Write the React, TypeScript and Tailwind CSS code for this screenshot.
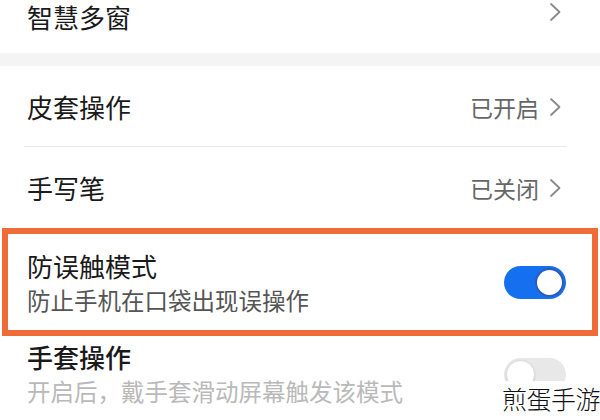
import React from "react";

const font = { fontFamily: '"Noto Sans CJK SC", "Noto Sans", sans-serif' };

function Chevron() {
  return (
    <svg width="13" height="20" viewBox="0 0 13 20" fill="none" className="shrink-0">
      <path d="M2 2l8.5 8L2 18" stroke="#8a8a8a" strokeWidth="1.8" strokeLinecap="round" strokeLinejoin="round" />
    </svg>
  );
}

function Toggle({ on }: { on: boolean }) {
  if (on) {
    return (
      <div className="w-[62px] h-[33px] rounded-full bg-[#1570ef] flex items-center justify-end p-[2px] shrink-0">
        <div className="w-[29px] h-[29px] rounded-full bg-white border-2 border-[#2a5cbf]" />
      </div>
    );
  }
  return (
    <div className="w-[62px] h-[33px] rounded-full bg-[#e8e8e8] flex items-center justify-start p-[2px] shrink-0">
      <div className="w-[29px] h-[29px] rounded-full bg-white border border-[#dcdcdc] shadow-sm" />
    </div>
  );
}

function LinkRow({ title, value, className }: { title: string; value?: string; className: string }) {
  return (
    <div className={`flex items-center justify-between pl-[27px] pr-[38px] ${className}`}>
      <span className="text-[26px] leading-[30px] text-[#1a1a1a]">{title}</span>
      <div className="flex items-center gap-[10px]">
        {value && <span className="text-[23px] leading-[28px] text-[#666666]">{value}</span>}
        <Chevron />
      </div>
    </div>
  );
}

export default function App() {
  return (
    <div className="relative w-[600px] h-[420px] overflow-hidden bg-white" style={font}>
      <LinkRow title="智慧多窗" className="h-[53px] items-start pt-[2px]" />
      <div className="h-[13px] bg-[#f4f4f4]" />
      <LinkRow title="皮套操作" value="已开启" className="h-[80px] pt-[1px]" />
      <div className="h-px bg-[#e9e9e9] ml-[24px] mr-[33px]" />
      <LinkRow title="手写笔" value="已关闭" className="h-[81px]" />

      <div className="mx-[2px] h-[108px] border-[6px] border-[#ef6b38] flex items-center justify-between pl-[19px] pr-[26px]">
        <div className="flex flex-col">
          <span className="text-[26px] leading-[32px] text-[#1a1a1a]">防误触模式</span>
          <span className="mt-[4px] text-[23.5px] leading-[28px] text-[#555555]">防止手机在口袋出现误操作</span>
        </div>
        <Toggle on />
      </div>

      <div className="flex items-start justify-between pl-[27px] pr-[34px] pt-[5px]">
        <div className="flex flex-col">
          <span className="text-[26px] leading-[32px] text-[#1a1a1a] font-medium">手套操作</span>
          <span className="mt-[4px] text-[23.5px] leading-[28px] text-[#b9b9b9]">开启后，戴手套滑动屏幕触发该模式</span>
        </div>
        <div className="mt-[17px]">
          <Toggle on={false} />
        </div>
      </div>

      <div className="absolute right-0 top-[381px] w-[100px] h-[39px] bg-white flex items-start justify-end">
        <span className="text-[25px] leading-[34px] font-light text-[#111111] tracking-[-0.5px] whitespace-nowrap">煎蛋手游</span>
      </div>
    </div>
  );
}
